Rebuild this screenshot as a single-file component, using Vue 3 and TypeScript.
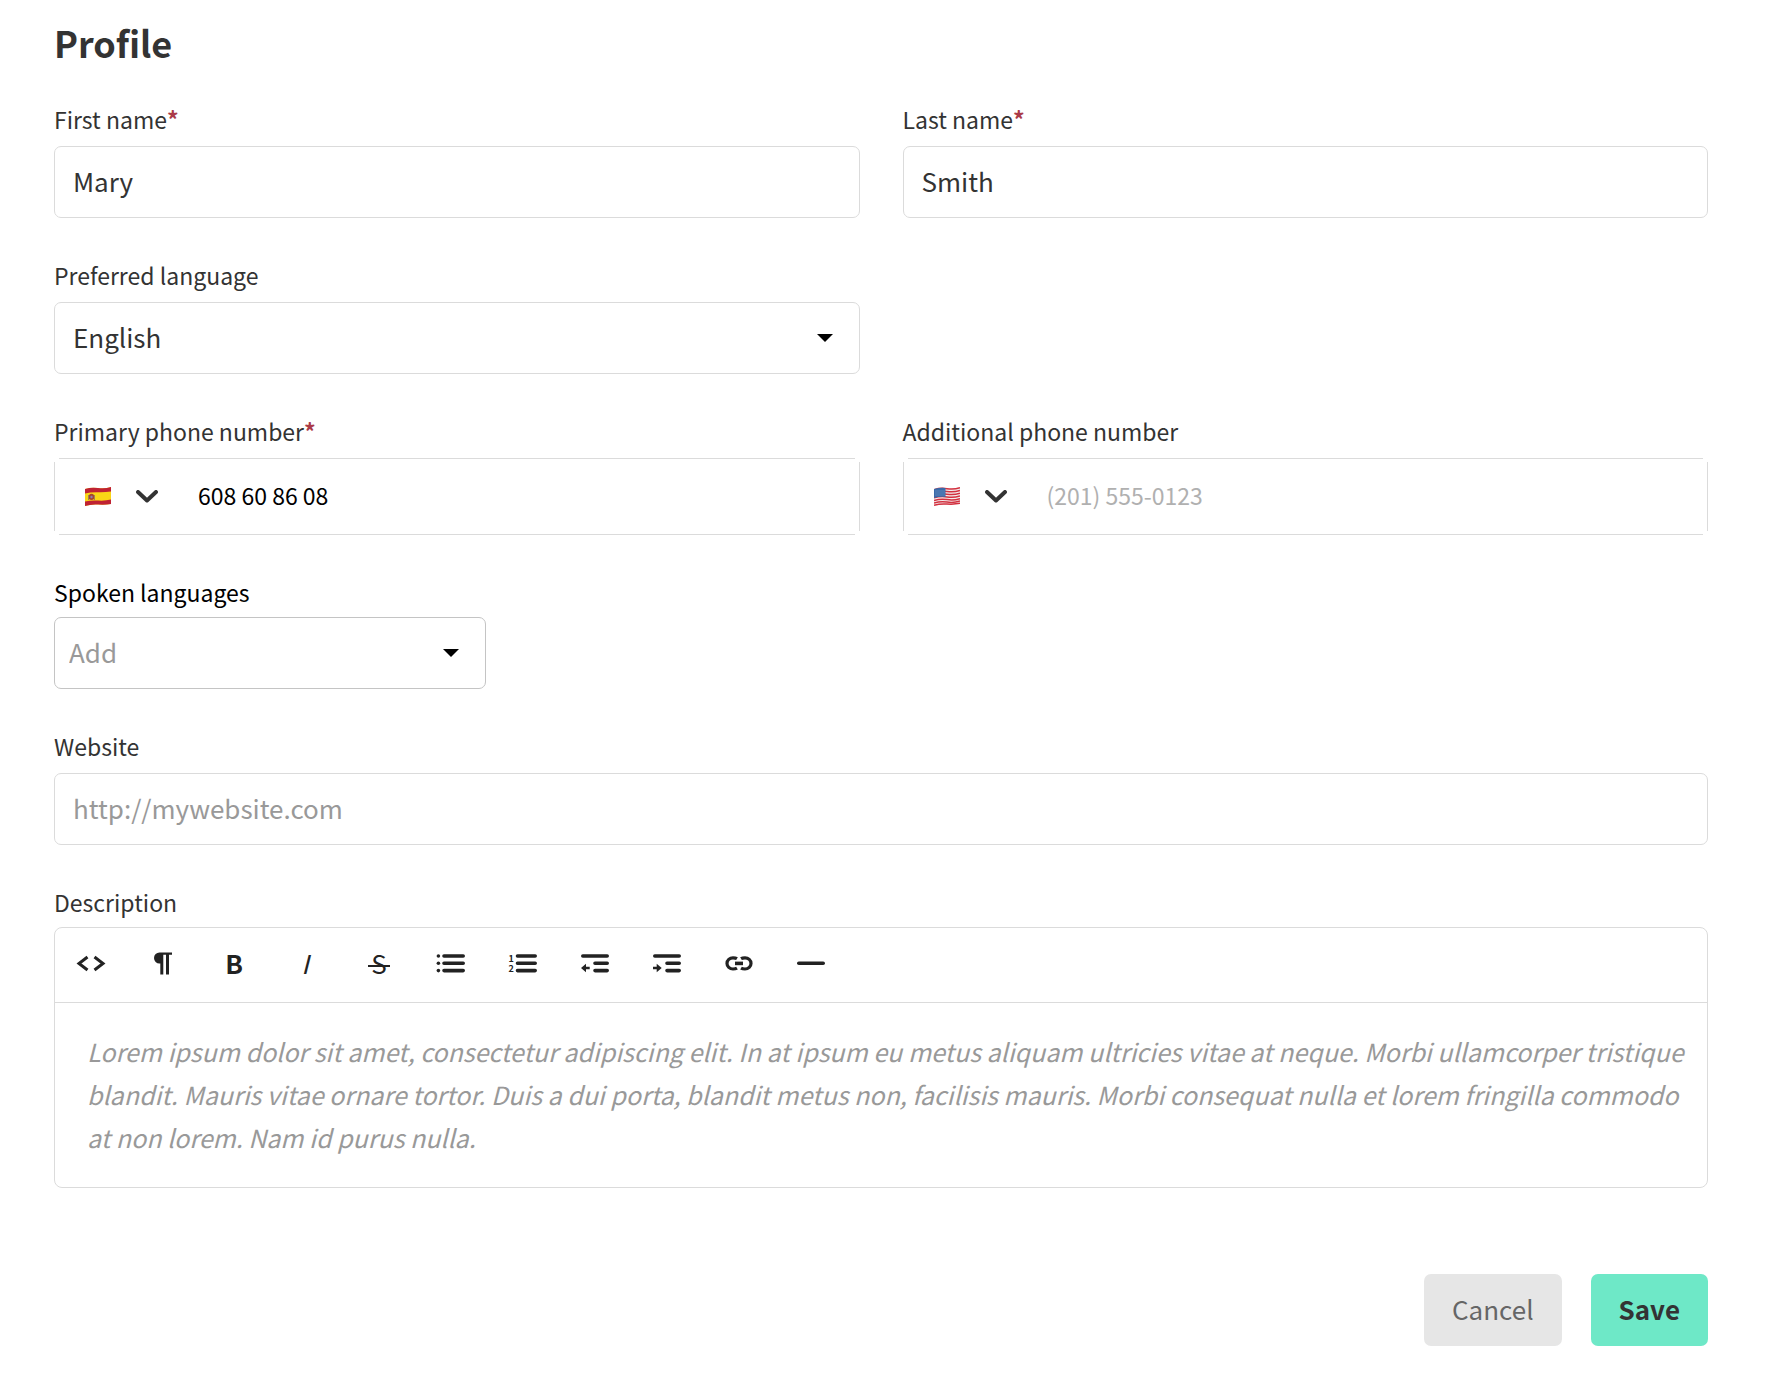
<script setup lang="ts">
import { ref } from 'vue'

type Country = 'es' | 'us'

interface PhoneField {
  id: string
  label: string
  required: boolean
  country: Country
  countryName: string
  value: string
  placeholder: string
}

const firstName = ref('Mary')
const lastName = ref('Smith')
const language = ref('en')
const spoken = ref('')
const website = ref('')
const description = ref('')

const phones = ref<PhoneField[]>([
  { id: 'phone-primary', label: 'Primary phone number', required: true, country: 'es', countryName: 'Spain', value: '608 60 86 08', placeholder: '' },
  { id: 'phone-extra', label: 'Additional phone number', required: false, country: 'us', countryName: 'United States', value: '', placeholder: '(201) 555-0123' },
])

const descriptionHint =
  'Lorem ipsum dolor sit amet, consectetur adipiscing elit. In at ipsum eu metus aliquam ultricies vitae at neque. Morbi ullamcorper tristique blandit. Mauris vitae ornare tortor. Duis a dui porta, blandit metus non, facilisis mauris. Morbi consequat nulla et lorem fringilla commodo at non lorem. Nam id purus nulla.'
</script>

<template>
  <form class="profile" @submit.prevent>
    <h1 class="title">Profile</h1>

    <div class="row">
      <div class="field">
        <label class="label" for="first-name">First name<span class="star">*</span></label>
        <input id="first-name" v-model="firstName" class="control" type="text" />
      </div>
      <div class="field">
        <label class="label" for="last-name">Last name<span class="star">*</span></label>
        <input id="last-name" v-model="lastName" class="control" type="text" />
      </div>
    </div>

    <div class="row">
      <div class="field">
        <label class="label" for="language">Preferred language</label>
        <div class="select">
          <select id="language" v-model="language" class="control">
            <option value="en">English</option>
            <option value="es">Español</option>
          </select>
          <svg class="caret" viewBox="0 0 16 8" aria-hidden="true"><path d="M0 0H16L8 8Z" /></svg>
        </div>
      </div>
    </div>

    <div class="row">
      <div v-for="phone in phones" :key="phone.id" class="field">
        <label class="label" :for="phone.id">{{ phone.label }}<span v-if="phone.required" class="star">*</span></label>
        <div class="phone">
          <button class="country" type="button" :aria-label="phone.countryName">
            <svg v-if="phone.country === 'es'" class="flag" viewBox="0 0 26 19">
              <path d="M0 2Q6 0 13 1T26 0V17Q20 18 13 17.500T0 19Z" fill="#f9d616" />
              <path d="M0 2Q6 0 13 1T26 0V4.500Q20 5.500 13 5.300T0 6.500Z" fill="#bf2233" />
              <path d="M0 14.500Q6 13 13 13.500T26 12.500V17Q20 18 13 17.500T0 19Z" fill="#bf2233" />
              <path d="M4 8Q6.500 5.500 9 8V12Q6.500 14 4 12Z" fill="#a8452f" />
              <path d="M3.500 8V13M9.500 8V13" stroke="#9c8550" stroke-width="1" />
              <circle cx="6.500" cy="10" r="1.200" fill="#8d7fa8" />
            </svg>
            <svg v-else class="flag" viewBox="0 0 26 19">
              <path d="M0 2Q6 0 13 1T26 0V17Q20 18 13 17.500T0 19Z" fill="#f3eeee" />
              <g fill="none" stroke="#d3303f" stroke-width="1.500">
                <path d="M0 2.700Q6 .7 13 1.700T26 .8" />
                <path d="M0 5.500Q6 3.500 13 4.500T26 3.500" />
                <path d="M0 8.200Q6 6.200 13 7.200T26 6.200" />
                <path d="M0 10.900Q6 8.900 13 9.900T26 8.900" />
                <path d="M0 13.600Q6 11.600 13 12.600T26 11.600" />
                <path d="M0 16Q6 14.200 13 15.100T26 14" />
                <path d="M0 18.200Q6 16.500 13 17T26 16.300" />
              </g>
              <path d="M0 2Q6 .3 11.500 1V10Q6 9.300 0 11Z" fill="#3a69a8" />
              <path d="M1.500 4H11M1.500 6H11M1.500 8H11" stroke="#8fb0d6" stroke-width=".8" stroke-dasharray="1 1" />
            </svg>
            <svg class="chevron" viewBox="0 0 22 13" aria-hidden="true"><path d="M2 2L11 10.500L20 2" /></svg>
          </button>
          <input :id="phone.id" v-model="phone.value" class="number" type="tel" :placeholder="phone.placeholder" />
        </div>
      </div>
    </div>

    <div class="field tight">
      <label class="label dark" for="spoken">Spoken languages</label>
      <div class="select short">
        <select id="spoken" v-model="spoken" class="control">
          <option value="">Add</option>
          <option value="en">English</option>
        </select>
        <svg class="caret" viewBox="0 0 16 8" aria-hidden="true"><path d="M0 0H16L8 8Z" /></svg>
      </div>
    </div>

    <div class="field">
      <label class="label" for="website">Website</label>
      <input id="website" v-model="website" class="control" type="url" placeholder="http://mywebsite.com" />
    </div>

    <div class="field tight">
      <label class="label" for="description">Description</label>
      <div class="editor">
        <div class="toolbar" role="toolbar" aria-label="Formatting">
          <button class="tool" type="button" aria-label="Code">
            <svg viewBox="0 0 28 28"><path d="M10.500 6L2 12.500L10.500 19M17.500 6L26 12.500L17.500 19" stroke-width="3" /></svg>
          </button>
          <button class="tool" type="button" aria-label="Paragraph">
            <svg viewBox="0 0 28 28"><path class="solid" d="M11 1.500H23V3.700H20V23.500H17V3.700H14.300V23.500H11.300V12.500H10.500A5.500 5.500 0 0 1 10.500 1.500Z" /></svg>
          </button>
          <button class="tool" type="button" aria-label="Bold">
            <svg viewBox="0 0 28 28"><text x="13" y="23" class="glyph bold">B</text></svg>
          </button>
          <button class="tool" type="button" aria-label="Italic">
            <svg viewBox="0 0 28 28"><text x="12" y="23" class="glyph italic">I</text></svg>
          </button>
          <button class="tool" type="button" aria-label="Strikethrough">
            <svg viewBox="0 0 28 28"><text x="14" y="23" class="glyph">S</text><path d="M3 15H25" stroke-width="2" /></svg>
          </button>
          <button class="tool" type="button" aria-label="Bulleted list">
            <svg viewBox="0 0 28 28">
              <path class="round" d="M7 5H26.200M7 12.300H26.200M7 19.600H26.200" />
              <circle class="solid" cx="1.400" cy="5" r="1.800" /><circle class="solid" cx="1.400" cy="12.300" r="1.800" /><circle class="solid" cx="1.400" cy="19.600" r="1.800" />
            </svg>
          </button>
          <button class="tool" type="button" aria-label="Numbered list">
            <svg viewBox="0 0 28 28">
              <path class="round" d="M8.500 5H26.200M8.500 12.300H26.200M8.500 19.600H26.200" />
              <text x="2.200" y="10.500" class="digit">1</text><text x="2.200" y="21" class="digit">2</text>
            </svg>
          </button>
          <button class="tool" type="button" aria-label="Decrease indent">
            <svg viewBox="0 0 28 28">
              <path class="round" d="M1.800 5H26.200M14 12.300H26.200M14 19.600H26.200" />
              <path class="solid" d="M0 17L5 12.800V15.800H8.700V18.200H5V21.200Z" />
            </svg>
          </button>
          <button class="tool" type="button" aria-label="Increase indent">
            <svg viewBox="0 0 28 28">
              <path class="round" d="M1.800 5H26.200M14 12.300H26.200M14 19.600H26.200" />
              <path class="solid" d="M8.700 17L3.700 12.800V15.800H0V18.200H3.700V21.200Z" />
            </svg>
          </button>
          <button class="tool" type="button" aria-label="Link">
            <svg viewBox="0 0 28 28">
              <path d="M12 7.700Q10.500 6.800 8 6.800A6 5.600 0 0 0 8 18Q10.500 18 12 17.100M16 7.700Q17.500 6.800 20 6.800A6 5.600 0 0 1 20 18Q17.500 18 16 17.100" stroke-width="3.200" />
              <path d="M10 12.400H18" stroke-width="3.600" />
            </svg>
          </button>
          <button class="tool" type="button" aria-label="Horizontal rule">
            <svg viewBox="0 0 28 28"><path class="round" d="M1.800 12.300H26.200" /></svg>
          </button>
        </div>
        <textarea id="description" v-model="description" class="text" rows="3" :placeholder="descriptionHint"></textarea>
      </div>
    </div>

    <div class="actions">
      <button class="btn cancel" type="button">Cancel</button>
      <button class="btn save" type="submit">Save</button>
    </div>
  </form>
</template>

<style>
body {
  background: #fff;
}
</style>

<style scoped>
*,
*::before,
*::after {
  box-sizing: border-box;
}

.profile {
  --line: #dbdbdb;
  --ink: #333;
  --muted: #999;
  display: flex;
  flex-direction: column;
  gap: 39px;
  padding: 16px 72px 38px 54px;
  color: var(--ink);
  font-family: "Noto Sans CJK SC", "Noto Sans", sans-serif;
}

input,
select,
textarea,
button {
  margin: 0;
  font-family: inherit;
  outline: none;
}

.title {
  margin: 0 0 -6px;
  font-size: 36px;
  line-height: 52px;
  font-weight: 700;
}

.row {
  display: grid;
  grid-template-columns: 1fr 1fr;
  gap: 43px;
}

.field {
  display: flex;
  flex-direction: column;
  gap: 9px;
  min-width: 0;
}

.tight {
  gap: 7px;
}

.label {
  font-size: 23px;
  line-height: 36px;
}

.dark {
  color: #000;
}

.star {
  color: #ab3a48;
  font-weight: 700;
}

.control {
  display: block;
  width: 100%;
  height: 72px;
  padding: 0 18px 4px;
  border: 1px solid var(--line);
  border-radius: 7px;
  background: #fff;
  color: var(--ink);
  font-size: 26px;
  appearance: none;
}

.control::placeholder,
.text::placeholder {
  color: var(--muted);
  opacity: 1;
}

.select {
  position: relative;
}

.short {
  width: 432px;
  max-width: 100%;
}

.short .control {
  padding: 0 14px 4px;
  border-color: #c4c4c4;
  color: var(--muted);
}

.caret {
  position: absolute;
  top: 32px;
  right: 27px;
  width: 16px;
  height: 8px;
  pointer-events: none;
}

/* The four edges stop short of the corners. */
.phone {
  display: flex;
  height: 77px;
  background:
    linear-gradient(var(--line), var(--line)) center top / calc(100% - 10px) 1px no-repeat,
    linear-gradient(var(--line), var(--line)) center bottom / calc(100% - 10px) 1px no-repeat,
    linear-gradient(var(--line), var(--line)) left center / 1px calc(100% - 8px) no-repeat,
    linear-gradient(var(--line), var(--line)) right center / 1px calc(100% - 8px) no-repeat;
}

.country {
  display: flex;
  align-items: center;
  gap: 25px;
  padding: 0 20px 0 31px;
  border: 0;
  background: none;
}

.flag {
  width: 26px;
  height: 19px;
}

.chevron {
  width: 22px;
  height: 13px;
  fill: none;
  stroke: #333;
  stroke-width: 4;
  stroke-linecap: round;
  stroke-linejoin: round;
}

.number {
  flex: 1;
  min-width: 0;
  padding: 0 20px 4px;
  border: 0;
  background: none;
  color: #000;
  font-size: 23px;
}

.number::placeholder {
  color: #b0b0b0;
  opacity: 1;
}

.editor {
  border: 1px solid var(--line);
  border-radius: 8px;
}

.toolbar {
  display: flex;
  border-bottom: 1px solid var(--line);
}

.tool {
  display: flex;
  align-items: center;
  justify-content: center;
  width: 72px;
  height: 74px;
  padding: 0;
  border: 0;
  background: none;
}

.tool svg {
  width: 28px;
  height: 28px;
  overflow: visible;
  fill: none;
  stroke: #222;
}

.tool .solid {
  fill: #222;
  stroke: none;
}

.tool .round {
  stroke-width: 3.6;
  stroke-linecap: round;
}

.tool text {
  fill: #222;
  stroke: none;
  text-anchor: middle;
}

.glyph {
  font-size: 26px;
}

.bold {
  font-weight: 700;
}

.italic {
  font-style: italic;
}

.tool .digit {
  font-size: 9px;
  font-weight: 700;
}

.text {
  display: block;
  width: 100%;
  height: 184px;
  padding: 27px 4px 26px 32px;
  border: 0;
  background: none;
  color: var(--ink);
  font-size: 25px;
  font-style: italic;
  line-height: 43px;
  overflow: hidden;
  resize: none;
}

.actions {
  display: flex;
  justify-content: flex-end;
  gap: 29px;
  margin-top: 47px;
}

.btn {
  height: 72px;
  padding: 0 28px 4px;
  border: 0;
  border-radius: 7px;
  font-size: 26px;
}

.cancel {
  background: #e6e6e6;
  color: #666;
}

.save {
  background: #6ee8c7;
  color: var(--ink);
  font-weight: 700;
}
</style>
